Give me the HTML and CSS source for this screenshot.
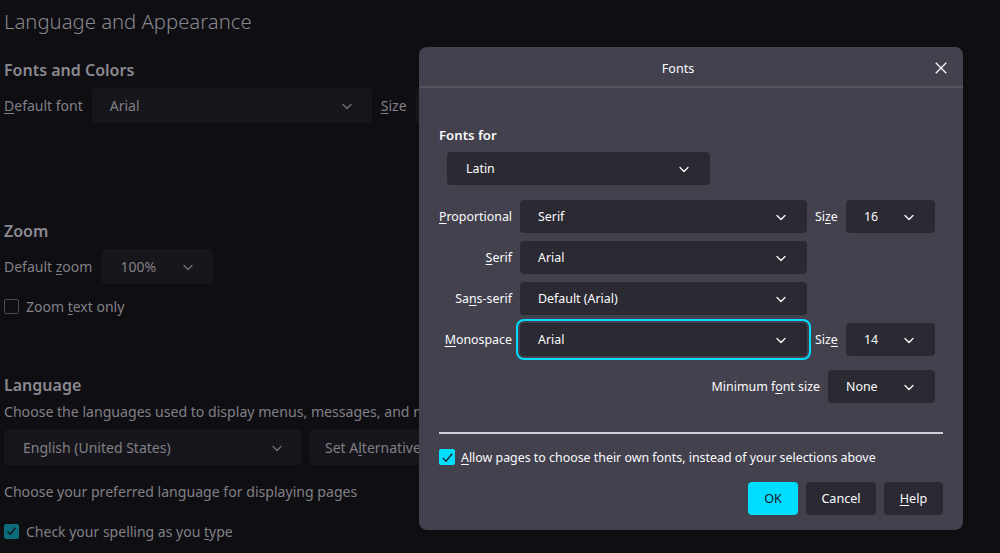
FILE: index.html
```html
<!DOCTYPE html>
<html lang="en">
<head>
<meta charset="utf-8">
<title>Fonts</title>
<link rel="stylesheet" href="styles.css">
</head>
<body>
<div class="page">
  <h1 class="page-title">Language and Appearance</h1>

  <h2 class="section-title first">Fonts and Colors</h2>
  <div class="row r-font">
    <span class="label"><u>D</u>efault font</span>
    <div class="pselect w-font"><span>Arial</span><svg class="chev" viewBox="0 0 12 12"><polyline points="2,4.5 6,8.5 10,4.5"/></svg></div>
    <span class="label"><u>S</u>ize</span>
    <div class="pselect w-size"><span>16</span></div>
  </div>

  <h2 class="section-title zoom">Zoom</h2>
  <div class="row r-zoom">
    <span class="label">Default <u>z</u>oom</span>
    <div class="pselect w-zoom"><span>100%</span><svg class="chev" viewBox="0 0 12 12"><polyline points="2,4.5 6,8.5 10,4.5"/></svg></div>
  </div>
  <label class="pcheck r-zoomtext"><span class="pbox"></span><span>Zoom <u>t</u>ext only</span></label>

  <h2 class="section-title lang">Language</h2>
  <p class="desc d1">Choose the languages used to display menus, messages, and notifications from Firefox.</p>
  <div class="row r-lang">
    <div class="pselect w-lang"><span>English (United States)</span><svg class="chev" viewBox="0 0 12 12"><polyline points="2,4.5 6,8.5 10,4.5"/></svg></div>
    <div class="pbutton"><span>Set A<u>l</u>ternatives…</span></div>
  </div>
  <p class="desc d2">Choose your preferred language for displaying pages</p>
  <label class="pcheck r-spell"><span class="pbox checked"><svg viewBox="0 0 16 16"><polyline points="3,8.5 6.5,12 13,4"/></svg></span><span>Check your spelling as you <u>t</u>ype</span></label>
</div>

<div class="dialog">
  <div class="dlg-header">
    <div class="dlg-title">Fonts</div>
    <div class="dlg-close"><svg viewBox="0 0 16 16"><path d="M2 2 L14 14 M14 2 L2 14"/></svg></div>
  </div>
  <div class="dlg-body">
    <div class="fonts-for">Fonts for</div>
    <div class="dselect w-latin"><span>Latin</span><svg class="chev" viewBox="0 0 12 12"><polyline points="2,4.5 6,8.5 10,4.5"/></svg></div>

    <div class="frows">
      <div class="frow">
        <span class="flabel"><u>P</u>roportional</span>
        <div class="dselect w-face"><span>Serif</span><svg class="chev" viewBox="0 0 12 12"><polyline points="2,4.5 6,8.5 10,4.5"/></svg></div>
        <span class="slabel">Si<u>z</u>e</span>
        <div class="dselect w-num"><span>16</span><svg class="chev" viewBox="0 0 12 12"><polyline points="2,4.5 6,8.5 10,4.5"/></svg></div>
      </div>
      <div class="frow">
        <span class="flabel"><u>S</u>erif</span>
        <div class="dselect w-face"><span>Arial</span><svg class="chev" viewBox="0 0 12 12"><polyline points="2,4.5 6,8.5 10,4.5"/></svg></div>
      </div>
      <div class="frow">
        <span class="flabel">Sa<u>n</u>s-serif</span>
        <div class="dselect w-face"><span>Default (Arial)</span><svg class="chev" viewBox="0 0 12 12"><polyline points="2,4.5 6,8.5 10,4.5"/></svg></div>
      </div>
      <div class="frow mono">
        <span class="flabel"><u>M</u>onospace</span>
        <div class="dselect w-face focused"><span>Arial</span><svg class="chev" viewBox="0 0 12 12"><polyline points="2,4.5 6,8.5 10,4.5"/></svg></div>
        <span class="slabel">Siz<u>e</u></span>
        <div class="dselect w-num"><span>14</span><svg class="chev" viewBox="0 0 12 12"><polyline points="2,4.5 6,8.5 10,4.5"/></svg></div>
      </div>
      <div class="frow minrow">
        <span class="mlabel">Minimum f<u>o</u>nt size</span>
        <div class="dselect w-min"><span>None</span><svg class="chev" viewBox="0 0 12 12"><polyline points="2,4.5 6,8.5 10,4.5"/></svg></div>
      </div>
    </div>

    <div class="sep"></div>

    <label class="dcheck"><span class="dbox"><svg viewBox="0 0 16 16"><polyline points="3,8.5 6.5,12 13,4"/></svg></span><span><u>A</u>llow pages to choose their own fonts, instead of your selections above</span></label>

    <div class="buttons">
      <div class="btn primary">OK</div>
      <div class="btn w-cancel">Cancel</div>
      <div class="btn w-help"><u>H</u>elp</div>
    </div>
  </div>
</div>
</body>
</html>
```

FILE: styles.css
```css
* { box-sizing: border-box; }

html, body {
  margin: 0;
  padding: 0;
  background: #0f0e13;
  width: 1000px;
  height: 553px;
  overflow: hidden;
}

body {
  font-family: "Noto Sans", "Open Sans", sans-serif;
  color: #818086;
  position: relative;
}

u {
  text-decoration: underline;
  text-underline-offset: 2px;
  text-decoration-thickness: 1px;
}

/* ---------- background page ---------- */
.page {
  padding-left: 4px;
  white-space: nowrap;
}

.page-title {
  margin: 6px 0 0;
  font-size: 20.3px;
  font-weight: 300;
  line-height: 30px;
  color: #88878d;
}

.section-title {
  margin: 0;
  font-size: 16px;
  font-weight: 600;
  line-height: 24px;
  color: #8a898f;
}
.section-title.first { margin-top: 22px; }
.section-title.zoom { margin-top: 96px; }
.section-title.lang { margin-top: 57px; }

.row {
  display: flex;
  align-items: center;
  gap: 9px;
  font-size: 14px;
}
.r-font { margin-top: 6px; height: 35px; }
.r-zoom { margin-top: 6px; height: 35px; }
.r-zoom { gap: 10px; }
.r-lang { margin-top: 8px; height: 35px; gap: 8px; }

.label { line-height: 20px; }

.pselect {
  height: 35px;
  background: #17161c;
  border-radius: 4px;
  display: flex;
  align-items: center;
  justify-content: space-between;
  padding: 0 19px 0 18px;
  font-size: 14px;
  color: #818086;
  flex: none;
}
.pselect .chev { stroke: #707076; }
.w-font { width: 280px; }
.w-size { width: 120px; }
.w-zoom { width: 111px; }
.w-lang { width: 298px; padding-left: 19px; }

.pbutton {
  height: 35px;
  width: 200px;
  background: #17161c;
  border-radius: 4px;
  display: flex;
  align-items: center;
  padding-left: 15px;
  flex: none;
}

.pcheck {
  display: flex;
  align-items: center;
  gap: 7px;
  height: 20px;
  font-size: 14px;
}
.r-zoomtext { margin-top: 12px; }
.r-spell { margin-top: 19px; }

.pbox {
  width: 15px;
  height: 15px;
  border: 1px solid #4c4b52;
  border-radius: 2px;
  flex: none;
  display: flex;
  align-items: center;
  justify-content: center;
}
.pbox.checked {
  background: #0b6c7b;
  border-color: #0b6c7b;
}
.pbox svg {
  width: 14px;
  height: 14px;
  fill: none;
  stroke: #111016;
  stroke-width: 1.6;
}

.desc {
  margin: 0;
  font-size: 14.1px;
  line-height: 20px;
}
.d1 { margin-top: 5px; }
.d2 { margin-top: 17px; }

.chev {
  width: 12px;
  height: 12px;
  fill: none;
  stroke-width: 1.3;
  stroke-linecap: round;
  stroke-linejoin: round;
  flex: none;
}

/* ---------- dialog ---------- */
.dialog {
  position: absolute;
  left: 419px;
  top: 47px;
  width: 544px;
  height: 483px;
  background: #42414d;
  border-radius: 8px;
  color: #fbfbfe;
  font-size: 12.4px;
  white-space: nowrap;
}

.dlg-header {
  height: 41px;
  border-bottom: 2px solid #56555f;
  display: flex;
  align-items: center;
  padding-top: 3px;
}
.dlg-title {
  flex: 1;
  text-align: center;
  font-size: 12.6px;
}
.dlg-close {
  width: 26px;
  display: flex;
  align-items: center;
}
.dlg-close svg {
  width: 14px;
  height: 14px;
  margin-left: -3px;
  fill: none;
  stroke: #fbfbfe;
  stroke-width: 1.5;
}

.dlg-body {
  padding: 0 20px;
}

.fonts-for {
  margin-top: 37px;
  line-height: 20px;
  font-size: 13.2px;
  font-weight: 600;
}

.dselect {
  height: 33px;
  background: #2b2a33;
  border-radius: 4px;
  display: flex;
  align-items: center;
  justify-content: space-between;
  padding: 0 20px 0 18px;
  flex: none;
}
.dselect .chev { stroke: #fbfbfe; }

.w-latin {
  margin-top: 7px;
  margin-left: 8px;
  width: 263px;
  padding-left: 19px;
}

.frows {
  margin-top: 15px;
  display: flex;
  flex-direction: column;
  gap: 8px;
}
.frow {
  display: flex;
  align-items: center;
  height: 33px;
}
.frow.minrow { margin-top: 6px; justify-content: flex-end; padding-right: 8px; }

.flabel {
  width: 73px;
  text-align: right;
  margin-right: 8px;
  flex: none;
}
.w-face { width: 287px; }
.slabel {
  margin-left: 8px;
  width: 31px;
  flex: none;
}
.w-num { width: 89px; }

.focused {
  outline: 2px solid #00ddff;
  outline-offset: 2px;
}

.mlabel { margin-right: 8px; }
.w-min { width: 107px; }

.sep {
  margin-top: 29px;
  height: 2px;
  background: #cfcfd8;
}

.dcheck {
  margin-top: 13px;
  display: flex;
  align-items: center;
  gap: 6px;
  height: 20px;
}
.dbox {
  width: 16px;
  height: 16px;
  background: #00ddff;
  border-radius: 2px;
  flex: none;
  display: flex;
  align-items: center;
  justify-content: center;
}
.dbox svg {
  width: 15px;
  height: 15px;
  fill: none;
  stroke: #1f2a35;
  stroke-width: 1.6;
}

.buttons {
  margin-top: 15px;
  display: flex;
  justify-content: flex-end;
  gap: 8px;
}
.btn {
  height: 33px;
  border-radius: 4px;
  background: #2b2a33;
  display: flex;
  align-items: center;
  justify-content: center;
  font-size: 12.6px;
}
.btn.primary {
  width: 50px;
  background: #00ddff;
  color: #15141a;
}
.w-cancel { width: 70px; }
.w-help { width: 59px; }
```
